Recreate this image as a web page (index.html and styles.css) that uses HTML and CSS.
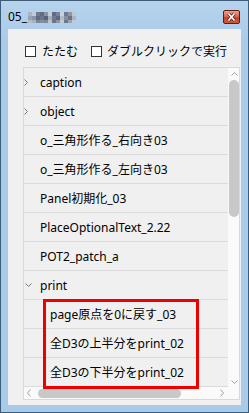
FILE: index.html
```html
<!DOCTYPE html>
<html lang="ja">
<head>
<meta charset="utf-8">
<title>05_</title>
<link rel="stylesheet" href="styles.css">
</head>
<body>
<div class="window">
  <div class="titlebar">
    <span class="title">05_</span>
    <span class="mosaic"><i></i><i></i><i></i><i></i><i></i><i></i><i></i><i></i><i></i><i></i><i></i><i></i></span>
    <span class="close"><svg width="15" height="12" viewBox="0 0 15 12"><path d="M4.5 2.5 L10.5 9.5 M10.5 2.5 L4.5 9.5" stroke="#5a1a10" stroke-width="3.2" fill="none"/><path d="M4.5 2.5 L10.5 9.5 M10.5 2.5 L4.5 9.5" stroke="#ffffff" stroke-width="1.8" fill="none"/></svg></span>
  </div>
  <div class="content">
    <div class="options">
      <label class="opt"><span class="box"></span>たたむ</label>
      <label class="opt opt2"><span class="box"></span>ダブルクリックで実行</label>
    </div>
    <div class="list">
      <div class="rows">
        <div class="row"><span class="exp"><svg width="4" height="7" viewBox="0 0 4 7"><path d="M0.5 0.5 L3.5 3.5 L0.5 6.5" stroke="#7a7a7a" fill="none"/></svg></span>caption</div>
        <div class="row"><span class="exp"><svg width="4" height="7" viewBox="0 0 4 7"><path d="M0.5 0.5 L3.5 3.5 L0.5 6.5" stroke="#7a7a7a" fill="none"/></svg></span>object</div>
        <div class="row"><span class="exp"></span>o_三角形作る_右向き03</div>
        <div class="row"><span class="exp"></span>o_三角形作る_左向き03</div>
        <div class="row"><span class="exp"></span>Panel初期化_03</div>
        <div class="row"><span class="exp"></span>PlaceOptionalText_2.22</div>
        <div class="row"><span class="exp"></span>POT2_patch_a</div>
        <div class="row"><span class="exp down"><svg width="7" height="4" viewBox="0 0 7 4"><path d="M0.5 0.5 L3.5 3.5 L6.5 0.5" stroke="#7a7a7a" fill="none"/></svg></span>print</div>
        <div class="row child">page原点を0に戻す_03</div>
        <div class="row child">全D3の上半分をprint_02</div>
        <div class="row child">全D3の下半分をprint_02</div>
      </div>
      <div class="vscroll">
        <svg class="up" width="7" height="4" viewBox="0 0 7 4"><path d="M0.5 3.5 L3.5 0.5 L6.5 3.5" stroke="#a0a0a0" fill="none"/></svg>
        <span class="vthumb"></span>
        <svg class="dn" width="7" height="4" viewBox="0 0 7 4"><path d="M0.5 0.5 L3.5 3.5 L6.5 0.5" stroke="#a0a0a0" fill="none"/></svg>
      </div>
      <div class="hscroll">
        <svg class="lt" width="4" height="8" viewBox="0 0 4 8"><path d="M3.5 0.5 L0.5 4 L3.5 7.5" stroke="#a0a0a0" fill="none"/></svg>
        <span class="hthumb"></span>
        <svg class="rt" width="4" height="8" viewBox="0 0 4 8"><path d="M0.5 0.5 L3.5 4 L0.5 7.5" stroke="#a0a0a0" fill="none"/></svg>
      </div>
      <div class="corner"></div>
    </div>
  </div>
  <div class="mark"></div>
</div>
</body>
</html>
```

FILE: styles.css
```css
html, body {
  margin: 0;
  padding: 0;
  background: #ffffff;
}

.window {
  position: relative;
  box-sizing: border-box;
  width: 249px;
  height: 413px;
  border: 1px solid #3e5c78;
  background: linear-gradient(#b7d3ed, #a9cbea 40px, #a9cbea);
  display: flex;
  flex-direction: column;
  font-family: "Noto Sans", "Noto Sans CJK JP", sans-serif;
  font-size: 12px;
  color: #000;
}

.titlebar {
  height: 28px;
  box-sizing: border-box;
  display: flex;
  align-items: flex-start;
  padding: 8px 8px 0 7px;
}

.title {
  line-height: 16px;
  height: 16px;
}

.mosaic {
  display: flex;
  margin: 3px 0 0 1px;
  height: 11px;
}

.mosaic i {
  display: block;
  width: 4px;
  height: 11px;
  background: linear-gradient(#aab4c2 0 4px, #97a2b2 4px 8px, #b4bdca 8px);
}
.mosaic i:nth-child(2) { background: linear-gradient(#c3cad4 0 4px, #8894a6 4px 8px, #a7b0be 8px); }
.mosaic i:nth-child(3) { background: linear-gradient(#6f7c90 0 4px, #5d6a80 4px 8px, #7a869a 8px); }
.mosaic i:nth-child(4) { background: linear-gradient(#606d83 0 4px, #6a778c 4px 8px, #8390a3 8px); }
.mosaic i:nth-child(5) { background: linear-gradient(#8995a7 0 4px, #56637a 4px 8px, #7d899c 8px); }
.mosaic i:nth-child(6) { background: linear-gradient(#c5ccd6 0 4px, #a6b0be 4px 8px, #bcc4cf 8px); }
.mosaic i:nth-child(7) { background: linear-gradient(#5f6c82 0 4px, #6e7a8f 4px 8px, #67748a 8px); }
.mosaic i:nth-child(8) { background: linear-gradient(#75829a 0 4px, #5c6980 4px 8px, #8a96a8 8px); }
.mosaic i:nth-child(9) { background: linear-gradient(#c9d0da 0 4px, #b2bbc8 4px 8px, #c2cad5 8px); }
.mosaic i:nth-child(10) { background: linear-gradient(#6c798e 0 4px, #8491a4 4px 8px, #6a778d 8px); }
.mosaic i:nth-child(11) { background: linear-gradient(#8d99ab 0 4px, #67748a 4px 8px, #9aa5b5 8px); }
.mosaic i:nth-child(12) { background: linear-gradient(#bec6d1 0 4px, #aab4c2 4px 8px, #c4cbd5 8px); }

.close {
  margin-left: auto;
  margin-top: 1px;
  box-sizing: border-box;
  width: 17px;
  height: 14px;
  border: 1px solid #5e1c14;
  border-radius: 2px;
  background: linear-gradient(#eaa18f, #d86a52 45%, #c5422a 55%, #d0583c);
  display: flex;
  align-items: center;
  justify-content: center;
}

.close svg {
  display: block;
}

.content {
  flex: 1;
  margin: 0 7px 7px 7px;
  background: #f0f0f0;
  padding: 16px 1px 5px 15px;
  display: flex;
  flex-direction: column;
}

.options {
  display: flex;
  align-items: center;
  height: 12px;
  line-height: 12px;
  margin-bottom: 10px;
  font-family: "Noto Sans CJK JP", sans-serif;
}

.opt {
  display: flex;
  align-items: center;
  gap: 6px;
  margin-left: 2px;
}

.opt2 {
  margin-left: 13px;
  gap: 5px;
}

.box {
  box-sizing: border-box;
  width: 11px;
  height: 11px;
  border: 1px solid #333333;
  background: #ffffff;
}

.list {
  flex: 1;
  min-height: 0;
  border: 1px solid #d9d9d9;
  display: grid;
  grid-template-columns: 1fr 11px;
  grid-template-rows: 1fr 12px;
  background: #f0f0f0;
}

.rows {
  overflow: hidden;
  min-height: 0;
}

.row {
  height: 28px;
  border-bottom: 1px solid #dadada;
  display: flex;
  align-items: center;
  white-space: nowrap;
  padding-left: 0;
}

.exp {
  width: 16px;
  flex: none;
  display: flex;
  align-items: center;
}

.exp svg {
  display: block;
}

.exp.down {
  padding-left: 1px;
  box-sizing: border-box;
}

.row.child {
  padding-left: 26px;
}

.vscroll {
  background: #fafafa;
  display: flex;
  flex-direction: column;
  align-items: center;
  padding-left: 1px;
}

.vscroll .up {
  margin-top: 4px;
  flex: none;
}

.vthumb {
  margin-top: 4px;
  width: 10px;
  height: 137px;
  border-radius: 5px;
  background: #c8c8c8;
  flex: none;
}

.vscroll .dn {
  margin-top: auto;
  margin-bottom: 3px;
  flex: none;
}

.hscroll {
  background: #fafafa;
  display: flex;
  align-items: center;
  padding-left: 3px;
}

.hthumb {
  margin-left: 7px;
  width: 143px;
  height: 9px;
  border-radius: 5px;
  background: #c8c8c8;
  flex: none;
}

.hscroll .rt {
  margin-left: auto;
  margin-right: 4px;
}

.corner {
  background: #fafafa;
}

.mark {
  position: absolute;
  left: 42px;
  top: 298px;
  width: 156px;
  height: 90px;
  box-sizing: border-box;
  border: 3px solid #ee0000;
}
```
